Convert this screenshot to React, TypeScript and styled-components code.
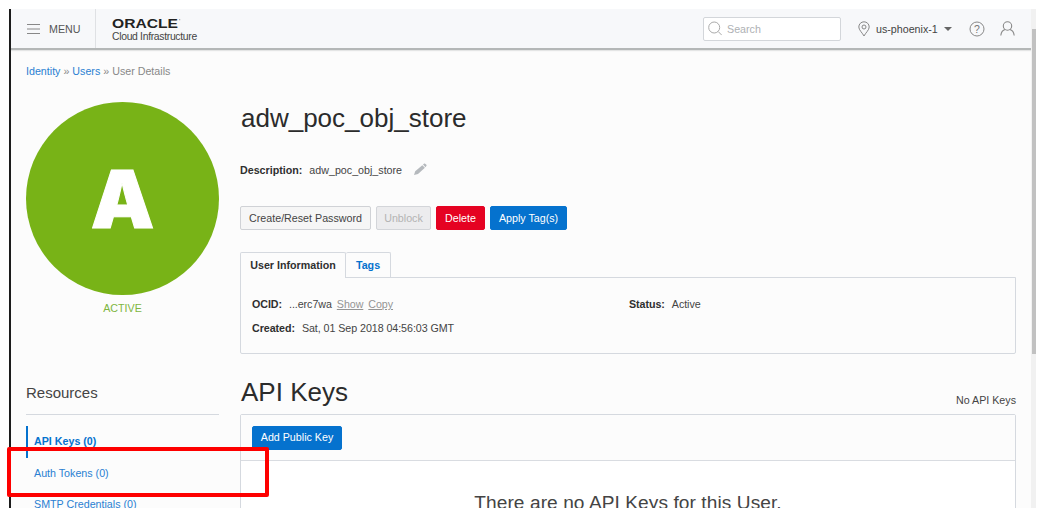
import React from 'react';
import styled, { createGlobalStyle } from 'styled-components';

const GlobalStyle = createGlobalStyle`
  * { box-sizing: border-box; }
  body {
    margin: 0;
    background: #fff;
    overflow: hidden;
    color: #444;
    font: 10.7px/16px "Liberation Sans", Arial, sans-serif;
  }
  h1, h2, h3, p { margin: 0; font-weight: 400; }
`;

const Page = styled.div`
  width: 1041px;
  height: 526px;
  padding: 9px 5px 18px 9px;
  position: relative;
`;
const Frame = styled.div`
  height: 499px;
  display: flex;
  overflow: hidden;
  background: #fcfcfc;
  border-left: 2px solid #1c1c1c;
`;
const Console = styled.div`
  width: 1020px;
  flex: none;
`;
const ScrollTrack = styled.div`
  flex: 1;
  padding: 20px 0 0 1px;
  background: #f1f1f1;
`;
const ScrollThumb = styled.div`
  height: 325px;
  background: #c1c1c1;
`;

const TopBar = styled.header`
  height: 41px;
  display: flex;
  align-items: stretch;
  background: #f7f8fa;
  border-bottom: 2px solid #b4b7b7;
  box-shadow: 0 1px 1px #e4e5e5;
`;
const MenuButton = styled.div`
  width: 85px;
  padding: 0 0 0 16px;
  display: flex;
  align-items: center;
  gap: 9px;
  border-right: 1px solid #dfe1e4;
  color: #555;
  svg { flex: none; }
`;
const Brand = styled.div`
  width: 200px;
  padding: 9px 0 0 16px;
  font-size: 10.4px;
  letter-spacing: -0.32px;
  line-height: 15px;
  svg { display: block; letter-spacing: 0; }
`;
const Tools = styled.div`
  margin-left: auto;
  padding-right: 16px;
  display: flex;
  align-items: center;
`;
const SearchBox = styled.div`
  width: 138px;
  height: 24px;
  margin-right: 17px;
  padding-left: 4px;
  display: flex;
  align-items: center;
  gap: 5px;
  background: #fff;
  border: 1px solid #d3d6da;
  border-radius: 2px;
  color: #aeb1b4;
`;
const Region = styled.div`
  width: 111px;
  display: flex;
  align-items: center;
  gap: 6px;
  white-space: nowrap;
`;
const Caret = styled.i`
  border: 4px solid transparent;
  border-top-color: #666;
  border-bottom: 0;
`;
const Help = styled.div`
  width: 31px;
  height: 16px;
`;

const Crumbs = styled.nav`
  height: 52px;
  padding: 13px 0 0 15px;
  color: #888;
`;
const Link = styled.span`
  color: #2a80d2;
`;
const Columns = styled.div`
  display: flex;
  gap: 21px;
  padding: 0 14px 0 15px;
`;
const Sidebar = styled.aside`
  width: 193px;
  flex: none;
`;
const Avatar = styled.div`
  height: 193px;
  display: flex;
  align-items: center;
  justify-content: center;
  border-radius: 50%;
  background: #78b317;
  color: #fff;
  font: 900 80px/80px Inter, sans-serif;
  -webkit-text-stroke: 1px #fff;
`;
const State = styled.div`
  height: 84px;
  padding-top: 5px;
  text-align: center;
  color: #7eb641;
`;
const ResourcesTitle = styled.h3`
  height: 36px;
  padding-top: 5px;
  margin-bottom: 11px;
  border-bottom: 1px solid #d5d9df;
  font-size: 15px;
  line-height: 17px;
`;
const ResourceItem = styled.div<{ $active?: boolean }>`
  height: 31.5px;
  padding-left: ${p => (p.$active ? 6 : 8)}px;
  border-left: ${p => (p.$active ? '2px solid #0572ce' : '0')};
  font-weight: ${p => (p.$active ? 700 : 400)};
  line-height: 30px;
  color: ${p => (p.$active ? '#0572ce' : '#2a80d2')};
`;

const Content = styled.main`
  width: 776px;
  flex: none;
`;
const Title = styled.h1`
  height: 61px;
  padding-left: 1px;
  font-size: 26px;
  line-height: 33px;
  color: #2b2b2b;
`;
const Description = styled.div`
  height: 43px;
  display: flex;
  line-height: 15px;
  svg { margin-left: 12px; }
`;
const Label = styled.b`
  margin-right: 7px;
  color: #2f2f2f;
`;
const ButtonRow = styled.div`
  display: flex;
  gap: 5px;
  height: 46px;
`;
const tones = {
  plain: ['#f6f6f6', '#d0d2d6', '#444'],
  disabled: ['#ececee', '#d3d5d9', '#b3b3b3'],
  danger: ['#e50222', '#e50222', '#fff'],
  primary: ['#0572ce', '#0572ce', '#fff'],
};
const Button = styled.div<{ $tone: keyof typeof tones; $width: number }>`
  width: ${p => p.$width}px;
  height: 24px;
  background: ${p => tones[p.$tone][0]};
  border: 1px solid ${p => tones[p.$tone][1]};
  border-radius: 2px;
  color: ${p => tones[p.$tone][2]};
  line-height: 22px;
  text-align: center;
  white-space: nowrap;
`;
const Tabs = styled.div`
  display: flex;
  height: 25px;
`;
const Tab = styled.div<{ $active?: boolean; $width: number }>`
  width: ${p => p.$width}px;
  height: ${p => (p.$active ? 26 : 25)}px;
  position: relative;
  border: 1px solid #d5d9df;
  border-width: ${p => (p.$active ? '1px 1px 0' : '1px 1px 0 0')};
  border-radius: 2px 2px 0 0;
  background: #fcfcfc;
  color: ${p => (p.$active ? '#2f2f2f' : '#0572ce')};
  font-weight: 700;
  line-height: 25px;
  text-align: center;
`;
const InfoPanel = styled.section`
  height: 77px;
  margin-bottom: 20px;
  padding: 18px 11px;
  display: grid;
  grid-template-columns: 377px 1fr;
  grid-auto-rows: 24px;
  letter-spacing: -0.06px;
  border: 1px solid #d5d9df;
  border-radius: 0 0 2px 2px;
`;
const Action = styled.span`
  margin-left: 5px;
  color: #949494;
  text-decoration: underline;
`;
const SectionHead = styled.div`
  height: 40px;
  display: flex;
  justify-content: space-between;
  h2 { padding-left: 1px; font-size: 26px; line-height: 36px; color: #2b2b2b; }
  span { padding-top: 18px; }
`;
const KeysPanel = styled.section`
  border: 1px solid #d5d9df;
  border-radius: 2px;
  background: #fff;
`;
const KeysToolbar = styled.div`
  height: 46px;
  padding: 11px;
  background: #fcfcfc;
  border-bottom: 1px solid #d9dce1;
  ${Button} { line-height: 21px; }
`;
const Empty = styled.p`
  height: 90px;
  padding-top: 31px;
  text-align: center;
  font-size: 19.1px;
  letter-spacing: 0.08px;
  line-height: 22px;
`;
const Highlight = styled.div`
  position: absolute;
  left: 7px;
  top: 447px;
  width: 262px;
  height: 50px;
  border: 4px solid #fe0000;
  border-radius: 2px;
`;

export default function App() {
  return (
    <Page>
      <GlobalStyle />
      <Frame>
        <Console>
          <TopBar>
            <MenuButton>
              <svg width="13" height="10" stroke="#888" strokeWidth="1">
                <path d="M0 .5h13M0 5h13M0 9.5h13" />
              </svg>
              MENU
            </MenuButton>
            <Brand>
              <svg width="70" height="11">
                <text x="0" y="9.5" fontFamily="Liberation Sans" fontWeight="700" fontSize="12.5" fill="#222" textLength="66" lengthAdjust="spacingAndGlyphs">ORACLE</text>
                <circle cx="67.7" cy="1.7" r=".6" fill="#999" />
              </svg>
              Cloud Infrastructure
            </Brand>
            <Tools>
              <SearchBox>
                <svg width="14" height="15" fill="none" stroke="#aaa">
                  <circle cx="6.2" cy="6.5" r="5.5" />
                  <path d="M10.2 10.5l3.5 3.6" />
                </svg>
                Search
              </SearchBox>
              <Region>
                <svg width="12" height="16" fill="none" stroke="#888">
                  <path d="M6 15C4.5 12 .8 9 .8 6a5.2 5.2 0 0 1 10.4 0c0 3-3.7 6-5.2 9z" />
                  <circle cx="6" cy="6" r="2" />
                </svg>
                us-phoenix-1
                <Caret />
              </Region>
              <Help>
                <svg width="16" height="16">
                  <circle cx="8" cy="8" r="7" fill="none" stroke="#888" />
                  <text x="8" y="11.7" textAnchor="middle" fontSize="10.5" fill="#777">?</text>
                </svg>
              </Help>
              <svg width="15" height="15" fill="none" stroke="#888" strokeWidth="1.1">
                <circle cx="7.5" cy="5" r="4.2" />
                <path d="M.8 14.5C1.2 11 3 9 5.200 8.500M14.2 14.5C13.8 11 12 9 9.800 8.500" />
              </svg>
            </Tools>
          </TopBar>
          <Crumbs>
            <Link>Identity</Link> » <Link>Users</Link> » User Details
          </Crumbs>
          <Columns>
            <Sidebar>
              <Avatar>A</Avatar>
              <State>ACTIVE</State>
              <ResourcesTitle>Resources</ResourcesTitle>
              <ResourceItem $active>API Keys (0)</ResourceItem>
              <ResourceItem>Auth Tokens (0)</ResourceItem>
              <ResourceItem>SMTP Credentials (0)</ResourceItem>
            </Sidebar>
            <Content>
              <Title>adw_poc_obj_store</Title>
              <Description>
                <Label>Description:</Label>adw_poc_obj_store
                <svg width="13" height="13" viewBox="0 0 13 13" fill="#b5b9bd">
                  <path d="M0 12l1.200-3.800L8.300 2.200l2.600 2.600L4 11zM9 1.600L10.200.5c.6-.5 3 1.300 2.300 2.300L11.500 4.200z" />
                </svg>
              </Description>
              <ButtonRow>
                <Button $tone="plain" $width={131}>Create/Reset Password</Button>
                <Button $tone="disabled" $width={55}>Unblock</Button>
                <Button $tone="danger" $width={49}>Delete</Button>
                <Button $tone="primary" $width={77}>Apply Tag(s)</Button>
              </ButtonRow>
              <Tabs>
                <Tab $active $width={106}>User Information</Tab>
                <Tab $width={45}>Tags</Tab>
              </Tabs>
              <InfoPanel>
                <div><Label>OCID:</Label>...erc7wa<Action>Show</Action><Action>Copy</Action></div>
                <div><Label>Status:</Label>Active</div>
                <div><Label>Created:</Label>Sat, 01 Sep 2018 04:56:03 GMT</div>
              </InfoPanel>
              <SectionHead>
                <h2>API Keys</h2>
                <span>No API Keys</span>
              </SectionHead>
              <KeysPanel>
                <KeysToolbar>
                  <Button $tone="primary" $width={90}>Add Public Key</Button>
                </KeysToolbar>
                <Empty>There are no API Keys for this User.</Empty>
              </KeysPanel>
            </Content>
          </Columns>
        </Console>
        <ScrollTrack><ScrollThumb /></ScrollTrack>
      </Frame>
      <Highlight />
    </Page>
  );
}
